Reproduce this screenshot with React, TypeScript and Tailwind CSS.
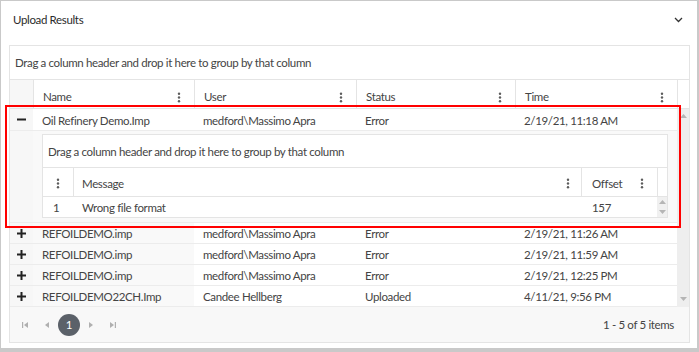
import React from "react";

interface Upload {
  name: string;
  user: string;
  status: string;
  time: string;
}

const uploads: Upload[] = [
  { name: "REFOILDEMO.imp", user: "medford\\Massimo Apra", status: "Error", time: "2/19/21, 11:26 AM" },
  { name: "REFOILDEMO.imp", user: "medford\\Massimo Apra", status: "Error", time: "2/19/21, 11:59 AM" },
  { name: "REFOILDEMO.imp", user: "medford\\Massimo Apra", status: "Error", time: "2/19/21, 12:25 PM" },
  { name: "REFOILDEMO22CH.Imp", user: "Candee Hellberg", status: "Uploaded", time: "4/11/21, 9:56 PM" },
];

const Kebab = () => (
  <svg width="4" height="11" viewBox="0 0 4 11" className="shrink-0">
    <circle cx="2" cy="1.7" r="1.2" fill="#5c5c5c" />
    <circle cx="2" cy="5.5" r="1.2" fill="#5c5c5c" />
    <circle cx="2" cy="9.3" r="1.2" fill="#5c5c5c" />
  </svg>
);

const Plus = () => (
  <svg width="9" height="9" viewBox="0 0 9 9">
    <rect x="0" y="3.5" width="9" height="2" fill="#222" />
    <rect x="3.5" y="0" width="2" height="9" fill="#222" />
  </svg>
);

const Minus = () => (
  <svg width="9" height="9" viewBox="0 0 9 9">
    <rect x="0" y="3.5" width="9" height="2" fill="#222" />
  </svg>
);

const HeaderCell = ({ label }: { label: string }) => (
  <div className="flex items-center justify-between pl-[9px] pr-[13px] pt-[6px] border-l border-[#e4e4e4]">
    <span>{label}</span>
    <Kebab />
  </div>
);

const cols = "grid grid-cols-[23px_161px_162px_159px_162px]";

const ScrollArrow = ({ up }: { up: boolean }) => (
  <svg width="7" height="4" viewBox="0 0 7 4">
    {up ? <path d="M0 4 L3.5 0 L7 4 Z" fill="#b5b5b5" /> : <path d="M0 0 L3.5 4 L7 0 Z" fill="#b5b5b5" />}
  </svg>
);

const PagerIcon = ({ kind }: { kind: "first" | "prev" | "next" | "last" }) => (
  <svg width="8" height="8" viewBox="0 0 8 8">
    {kind === "first" && (
      <>
        <rect x="1" y="1" width="1.2" height="6" fill="#b0b0b0" />
        <path d="M7 1 L3 4 L7 7 Z" fill="#b0b0b0" />
      </>
    )}
    {kind === "prev" && <path d="M6 1 L2 4 L6 7 Z" fill="#b0b0b0" />}
    {kind === "next" && <path d="M2 1 L6 4 L2 7 Z" fill="#b0b0b0" />}
    {kind === "last" && (
      <>
        <path d="M1 1 L5 4 L1 7 Z" fill="#b0b0b0" />
        <rect x="5.8" y="1" width="1.2" height="6" fill="#b0b0b0" />
      </>
    )}
  </svg>
);

export default function App() {
  return (
    <div
      className="relative w-[699px] h-[352px] bg-white text-[11.5px] tracking-[-0.35px] text-[#444] border border-[#c9c9c9] border-b-[4px] border-r-[2px]"
      style={{ fontFamily: 'Lato, "Open Sans", sans-serif' }}
    >
      <div className="flex items-center justify-between h-[44px] pl-[12px] pr-[14px] pb-[6px]">
        <span className="text-[#2b2b2b]">Upload Results</span>
        <svg width="9" height="6" viewBox="0 0 9 6">
          <path d="M1 1 L4.5 4.5 L8 1" stroke="#333" strokeWidth="1.3" fill="none" />
        </svg>
      </div>

      <div className="mx-[8px] w-[681px] border border-[#e4e4e4]">
        <div className="h-[34px] flex items-center pl-[5px] pt-[1px] border-b border-[#e4e4e4]">
          Drag a column header and drop it here to group by that column
        </div>

        <div className="flex h-[29px] border-b border-[#e4e4e4]">
          <div className={cols}>
            <div className="bg-[#f7f7f7]" />
            <HeaderCell label="Name" />
            <HeaderCell label="User" />
            <HeaderCell label="Status" />
            <HeaderCell label="Time" />
          </div>
          <div className="w-[12px] border-l border-[#e4e4e4]" />
        </div>

        <div className="flex">
          <div className="w-[667px]">
            <div className={`${cols} h-[22px] items-center border-b border-[#ececec]`}>
              <div className="flex justify-center h-full items-center bg-[#f7f7f7]">
                <Minus />
              </div>
              <div className="pl-[9px] pt-[2px]">Oil Refinery Demo.Imp</div>
              <div className="pl-[9px] pt-[2px]">medford\Massimo Apra</div>
              <div className="pl-[9px] pt-[2px]">Error</div>
              <div className="pl-[9px] pt-[2px]">2/19/21, 11:18 AM</div>
            </div>

            <div className="flex h-[92px] border-b border-[#ececec]">
              <div className="w-[23px] bg-[#f7f7f7]" />
              <div className="flex-1 bg-[#f9f9f9] pl-[9px] pr-[9px] pt-[3px]">
                <div className="w-[626px] bg-white border border-[#e4e4e4]">
                  <div className="h-[33px] flex items-center pl-[5px] pt-[1px] border-b border-[#e4e4e4]">
                    Drag a column header and drop it here to group by that column
                  </div>
                  <div className="flex h-[29px] border-b border-[#e4e4e4]">
                    <div className="w-[30px] flex justify-center items-center pt-[2px]">
                      <Kebab />
                    </div>
                    <div className="w-[508px] flex items-center justify-between pl-[8px] pr-[11px] pt-[3px] border-l border-[#e4e4e4]">
                      <span>Message</span>
                      <Kebab />
                    </div>
                    <div className="w-[76px] flex items-center justify-between pl-[10px] pr-[13px] pt-[3px] border-l border-[#e4e4e4]">
                      <span>Offset</span>
                      <Kebab />
                    </div>
                    <div className="w-[10px] border-l border-[#e4e4e4]" />
                  </div>
                  <div className="flex h-[20px] items-center">
                    <div className="w-[30px] pl-[10px] pt-[1px]">1</div>
                    <div className="w-[508px] pl-[9px] pt-[1px]">Wrong file format</div>
                    <div className="w-[76px] pl-[11px] pt-[1px]">157</div>
                    <div className="w-[10px] h-full bg-[#f0f0f0] flex flex-col items-center justify-between py-[3px]">
                      <ScrollArrow up />
                      <ScrollArrow up={false} />
                    </div>
                  </div>
                </div>
              </div>
            </div>

            {uploads.map((u, i) => (
              <div key={i} className={`${cols} h-[21px] items-center border-b border-[#ececec]`}>
                <div className="flex justify-center h-full items-center bg-[#f7f7f7]">
                  <Plus />
                </div>
                <div className="pl-[9px] pt-[2px] h-full flex items-center bg-[#f9f9f9]">{u.name}</div>
                <div className="pl-[9px] pt-[2px]">{u.user}</div>
                <div className="pl-[9px] pt-[2px]">{u.status}</div>
                <div className="pl-[9px] pt-[2px]">{u.time}</div>
              </div>
            ))}
          </div>
          <div className="w-[12px] bg-[#eeeeee] flex flex-col items-center justify-between pt-[5px] pb-[6px]">
            <ScrollArrow up />
            <ScrollArrow up={false} />
          </div>
        </div>

        <div className="h-[35px] bg-[#f8f8f8] flex items-center justify-between pl-[4px] pr-[15px]">
          <div className="flex items-center">
            <div className="w-[22px] flex justify-center">
              <PagerIcon kind="first" />
            </div>
            <div className="w-[22px] flex justify-center">
              <PagerIcon kind="prev" />
            </div>
            <div className="w-[22px] h-[22px] rounded-full bg-[#5b6169] text-white flex items-center justify-center">
              1
            </div>
            <div className="w-[22px] flex justify-center">
              <PagerIcon kind="next" />
            </div>
            <div className="w-[22px] flex justify-center">
              <PagerIcon kind="last" />
            </div>
          </div>
          <span className="pt-[1px]">1 - 5 of 5 items</span>
        </div>
      </div>

      <div className="absolute left-[4px] top-[104px] w-[676px] h-[123px] border-2 border-[#ff0000]" />
    </div>
  );
}
